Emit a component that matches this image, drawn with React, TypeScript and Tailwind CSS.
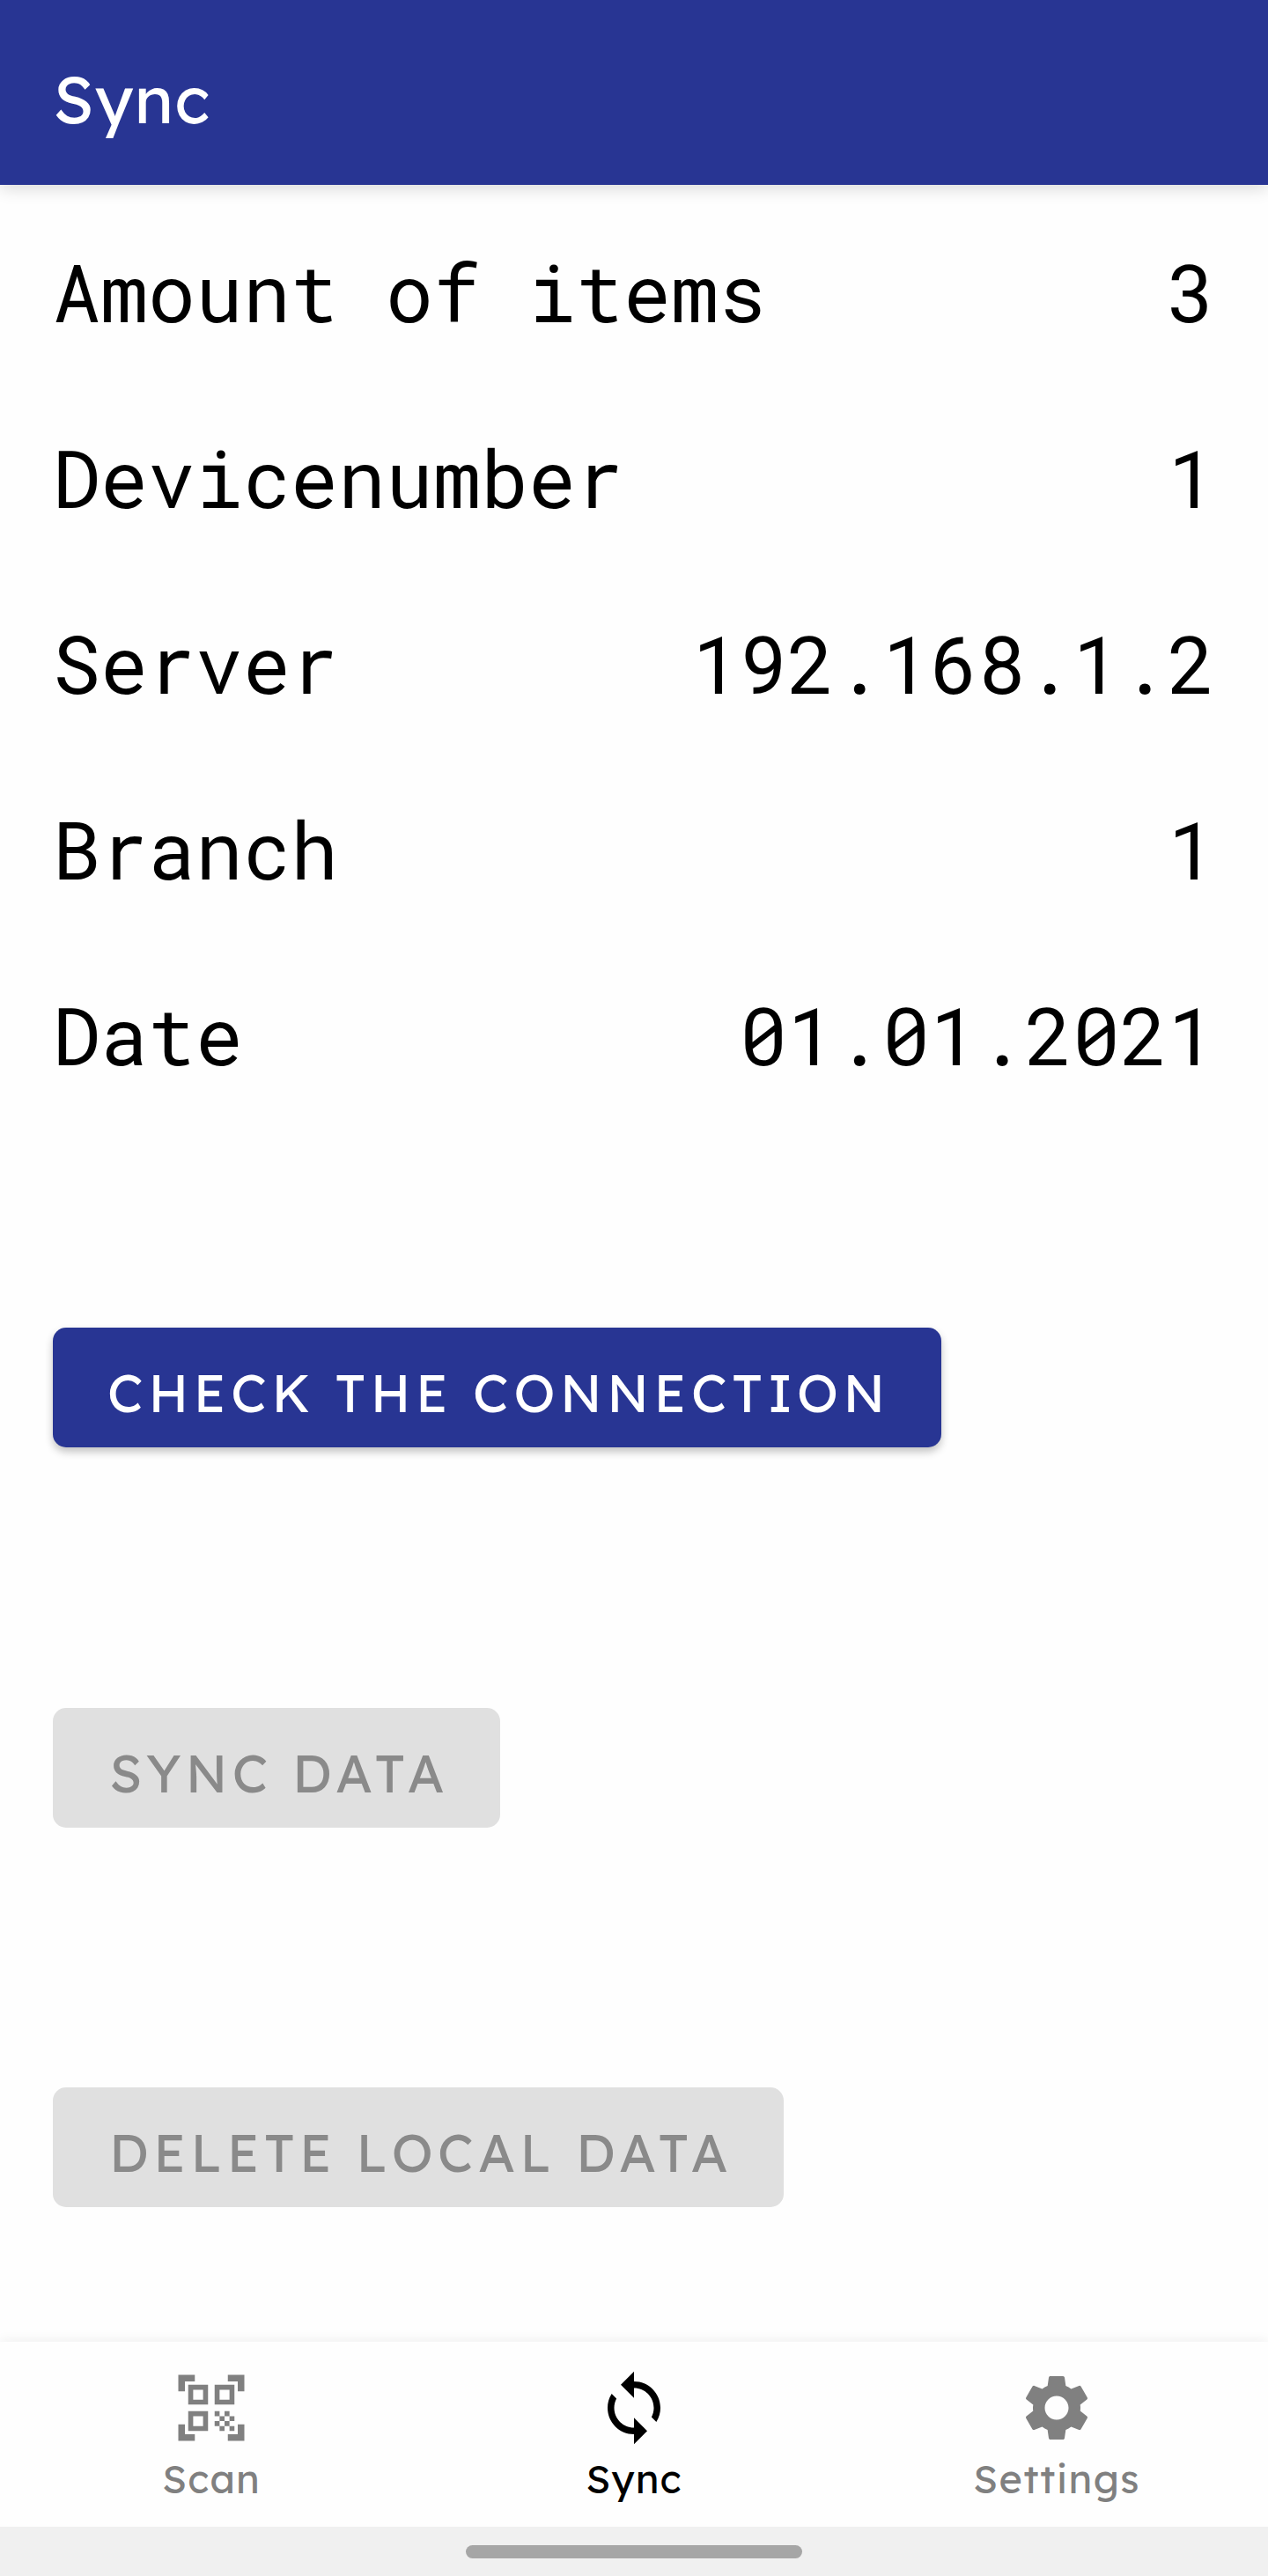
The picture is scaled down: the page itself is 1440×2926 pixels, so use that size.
import { MdSettings, MdSync } from "react-icons/md";

const rows = [
  { label: "Amount of items", value: "3" },
  { label: "Devicenumber", value: "1" },
  { label: "Server", value: "192.168.1.2" },
  { label: "Branch", value: "1" },
  { label: "Date", value: "01.01.2021" },
];

const corners = "M2 2h5v2H4v3H2zM17 2h5v5h-2V4h-3zM2 17h2v3h3v2H2zM20 17h2v5h-5v-2h3z";
const finders =
  "M5 5h6v6H5zM6.5 6.5v3h3v-3zM13 5h6v6h-6zM14.5 6.5v3h3v-3zM5 13h6v6H5zM6.5 14.5v3h3v-3z";
const dots =
  "M13 13h1.5v1.5H13zM16 13h1.5v1.5H16zM14.5 14.5H16V16h-1.5zM17.5 14.5H19V16h-1.5zM13 16h1.5v1.5H13zM16 16h1.5v1.5H16zM14.5 17.5H16V19h-1.5zM17.5 17.5H19V19h-1.5z";

function ScanIcon() {
  return (
    <svg viewBox="0 0 24 24" fill="currentColor" className="size-[90px]">
      <path fillRule="evenodd" d={corners + finders + dots} />
    </svg>
  );
}

const buttonBase =
  "flex h-[136px] items-center whitespace-nowrap rounded-[15px] pt-[11px] text-[60px] leading-none";

const tab = "flex flex-1 flex-col items-center pt-[30px]";
const tabLabel = "mt-[7px] text-[45px] leading-[56px]";

export default function App() {
  return (
    <div className="flex h-[2926px] w-[1440px] flex-col overflow-hidden bg-[#fefefe] font-['Lexend','Lexend_Deca',Inter,sans-serif] text-black">
      <header className="flex h-[210px] shrink-0 items-center bg-[#283593] pt-[14px] pl-[60px] shadow-[0_4px_18px_rgba(0,0,0,0.15)]">
        <h1 className="text-[75px] leading-none tracking-[1.1px] text-white">Sync</h1>
      </header>

      <main className="flex-1 px-[60px] pt-4">
        <dl className="font-['Roboto_Mono','DejaVu_Sans_Mono',monospace] text-[90px] leading-[211px]">
          {rows.map((row) => (
            <div key={row.label} className="flex h-[211px] justify-between">
              <dt>{row.label}</dt>
              <dd>{row.value}</dd>
            </div>
          ))}
        </dl>

        <div className="flex flex-col items-start pt-[227px]">
          <button
            className={`${buttonBase} w-[1009px] bg-[#283593] pl-[62px] tracking-[5.65px] text-white shadow-[0_5px_10px_rgba(0,0,0,0.24)]`}
          >
            CHECK THE CONNECTION
          </button>
          <button
            disabled
            className={`${buttonBase} mt-[296px] w-[508px] bg-[#e0e0e0] pl-[64px] tracking-[5.36px] text-[#8a8a8a]`}
          >
            SYNC DATA
          </button>
          <button
            disabled
            className={`${buttonBase} mt-[295px] w-[830px] bg-[#e0e0e0] pl-[64px] tracking-[5.4px] text-[#8a8a8a]`}
          >
            DELETE LOCAL DATA
          </button>
        </div>
      </main>

      <nav className="flex h-[210px] shrink-0 bg-[#fefefe] shadow-[0_-2px_12px_rgba(0,0,0,0.06)]">
        <div className={`${tab} text-[#808080]`}>
          <ScanIcon />
          <span className={`${tabLabel} tracking-[1.1px]`}>Scan</span>
        </div>
        <div className={`${tab} text-black`}>
          <MdSync className="size-[90px]" />
          <span className={`${tabLabel} tracking-[1.1px]`}>Sync</span>
        </div>
        <div className={`${tab} text-[#808080]`}>
          <MdSettings className="size-[90px]" />
          <span className={`${tabLabel} tracking-[1.4px]`}>Settings</span>
        </div>
      </nav>

      <footer className="flex h-14 shrink-0 justify-center bg-[#f0f0f0] pt-[21px]">
        <div className="h-[15px] w-[382px] rounded-full bg-[#a6a6a6]" />
      </footer>
    </div>
  );
}
